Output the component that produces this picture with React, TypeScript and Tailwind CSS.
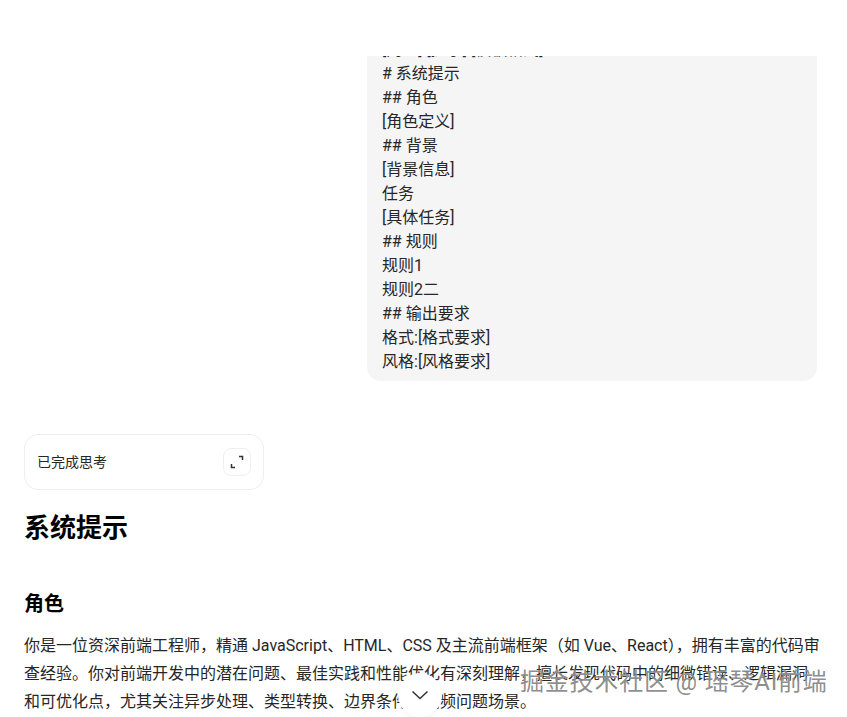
import React from 'react';

const promptLines = [
  '# 系统提示',
  '## 角色',
  '[角色定义]',
  '## 背景',
  '[背景信息]',
  '任务',
  '[具体任务]',
  '## 规则',
  '规则1',
  '规则2二',
  '## 输出要求',
  '格式:[格式要求]',
  '风格:[风格要求]',
];

const font = { fontFamily: 'Roboto, "Noto Sans CJK SC", sans-serif' };

export default function App() {
  return (
    <div className="relative h-[717px] overflow-hidden bg-white text-[#262626]" style={font}>
      <div className="h-14" />
      <div className="flex justify-end pr-[30px] overflow-hidden">
        <div className="-mt-[18px] w-[450px] rounded-[14px] bg-[#f5f5f5] px-[15px] pb-[7px] text-base leading-6">
          <div>[角色] [提示] [模板格式]</div>
          {promptLines.map((line, i) => (
            <div key={i}>{line}</div>
          ))}
        </div>
      </div>

      <div className="mt-[53px] ml-6 flex h-14 w-60 items-center justify-between rounded-[14px] border border-[#eeeeee] px-3">
        <span className="text-sm">已完成思考</span>
        <button className="flex size-7 items-center justify-center rounded-lg border border-[#f0f0f0]">
          <svg width="16" height="16" viewBox="0 0 16 16" fill="none" stroke="#333" strokeWidth="1.5">
            <path d="M10 2.5h3.5V6" />
            <path d="M6 13.5H2.5V10" />
          </svg>
        </button>
      </div>

      <h1 className="mt-[21px] ml-6 text-[26px] leading-[34px] font-bold text-black">系统提示</h1>
      <h2 className="mt-[45px] ml-6 text-xl leading-7 font-bold text-black">角色</h2>
      <p className="mt-[14px] ml-6 w-[797px] text-base leading-7">
        你是一位资深前端工程师，精通 JavaScript、HTML、CSS 及主流前端框架（如 Vue、React），拥有丰富的代码审查经验。你对前端开发中的潜在问题、最佳实践和性能优化有深刻理解，擅长发现代码中的细微错误、逻辑漏洞和可优化点，尤其关注异步处理、类型转换、边界条件和高频问题场景。
      </p>

      <button className="absolute left-[398px] top-[673px] flex size-11 items-center justify-center rounded-full bg-white shadow-[0_0_6px_rgba(0,0,0,0.06)]">
        <svg width="20" height="20" viewBox="0 0 20 20" fill="none" stroke="#333" strokeWidth="1.5">
          <path d="M2.5 6.5 10 13.5l7.5-7" />
        </svg>
      </button>

      <div className="absolute left-[520px] top-[666px] text-2xl leading-8 tracking-[0.8px] text-[#707070]/80 [text-shadow:0_0_1px_rgba(255,255,255,0.9)]">
        掘金技术社区 @ 瑶琴AI前端
      </div>
    </div>
  );
}
